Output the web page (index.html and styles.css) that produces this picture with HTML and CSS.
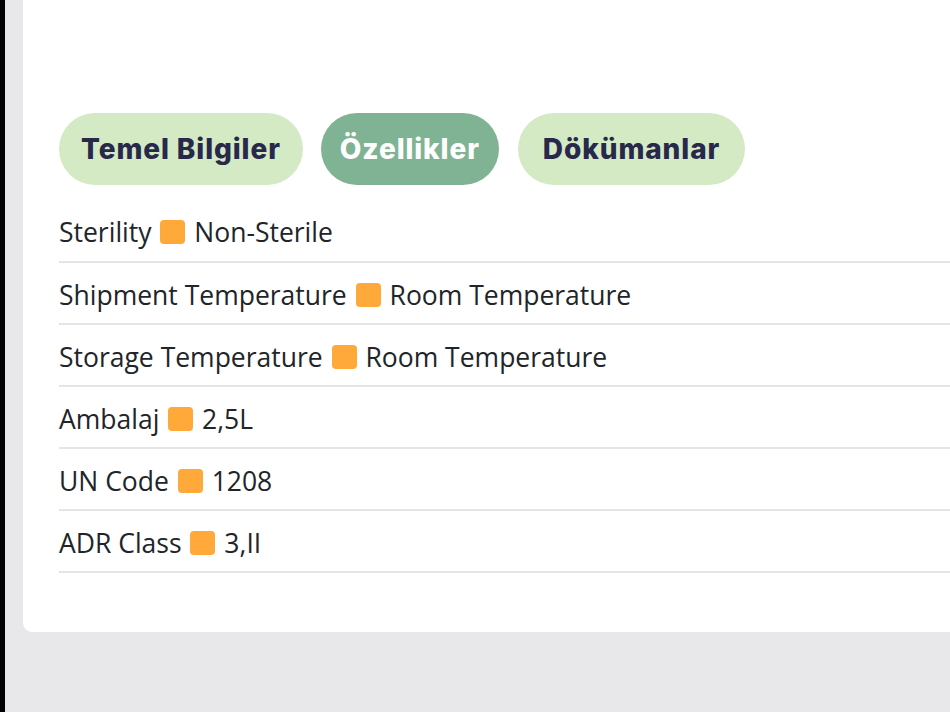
FILE: index.html
```html
<!DOCTYPE html>
<html lang="tr">
<head>
<meta charset="utf-8">
<link rel="stylesheet" href="styles.css">
</head>
<body>
<div class="frame">
  <div class="edge"></div>
  <div class="main">
    <div class="card">
      <div class="tabs">
        <button class="tab">Temel Bilgiler</button>
        <button class="tab active">Özellikler</button>
        <button class="tab wide">Dökümanlar</button>
      </div>
      <ul class="props">
        <li>Sterility <span class="sq"></span> Non-Sterile</li>
        <li>Shipment Temperature <span class="sq"></span> Room Temperature</li>
        <li>Storage Temperature <span class="sq"></span> Room Temperature</li>
        <li>Ambalaj <span class="sq"></span> 2,5L</li>
        <li>UN Code <span class="sq"></span> 1208</li>
        <li>ADR Class <span class="sq"></span> 3,II</li>
      </ul>
    </div>
  </div>
</div>
</body>
</html>
```
FILE: styles.css
```css
* { box-sizing: border-box; }
html, body { margin: 0; padding: 0; }
body { background: #e8e8ea; overflow: hidden; }
.frame { display: flex; height: 712px; width: 950px; }
.edge { width: 5px; background: #000; flex: none; }
.main { flex: 1; background: #e8e8ea; padding-left: 18px; }
.card {
  background: #fff;
  height: 632px;
  border-bottom-left-radius: 9px;
  padding: 113px 0 0 36px;
}
.tabs { display: flex; gap: 18px; }
.tab {
  height: 72px;
  border: none;
  border-radius: 36px;
  background: #d3eac5;
  color: #27284a;
  font-family: Inter, "Open Sans", sans-serif;
  font-weight: 800;
  font-size: 28px;
  padding: 0 22px;
  letter-spacing: 0.9px;
}
.tab.active { background: #80b294; color: #fff; padding: 0 19px; }
.tab.wide { padding: 0 25px; margin-left: 1px; }
.props { list-style: none; margin: 15px 0 0; padding: 0; }
.props li {
  height: 62px;
  border-bottom: 2px solid #e5e5e5;
  display: flex;
  align-items: center;
  padding-top: 3px;
  font-family: "Open Sans", "Noto Sans", sans-serif;
  font-size: 26.5px;
  color: #212529;
  white-space: pre;
}
.props li:first-child { height: 63px; }
.sq {
  display: inline-block;
  width: 25px;
  height: 24px;
  margin: 0 2px;
  background: #ffa93a;
  border-radius: 4px;
}
```
